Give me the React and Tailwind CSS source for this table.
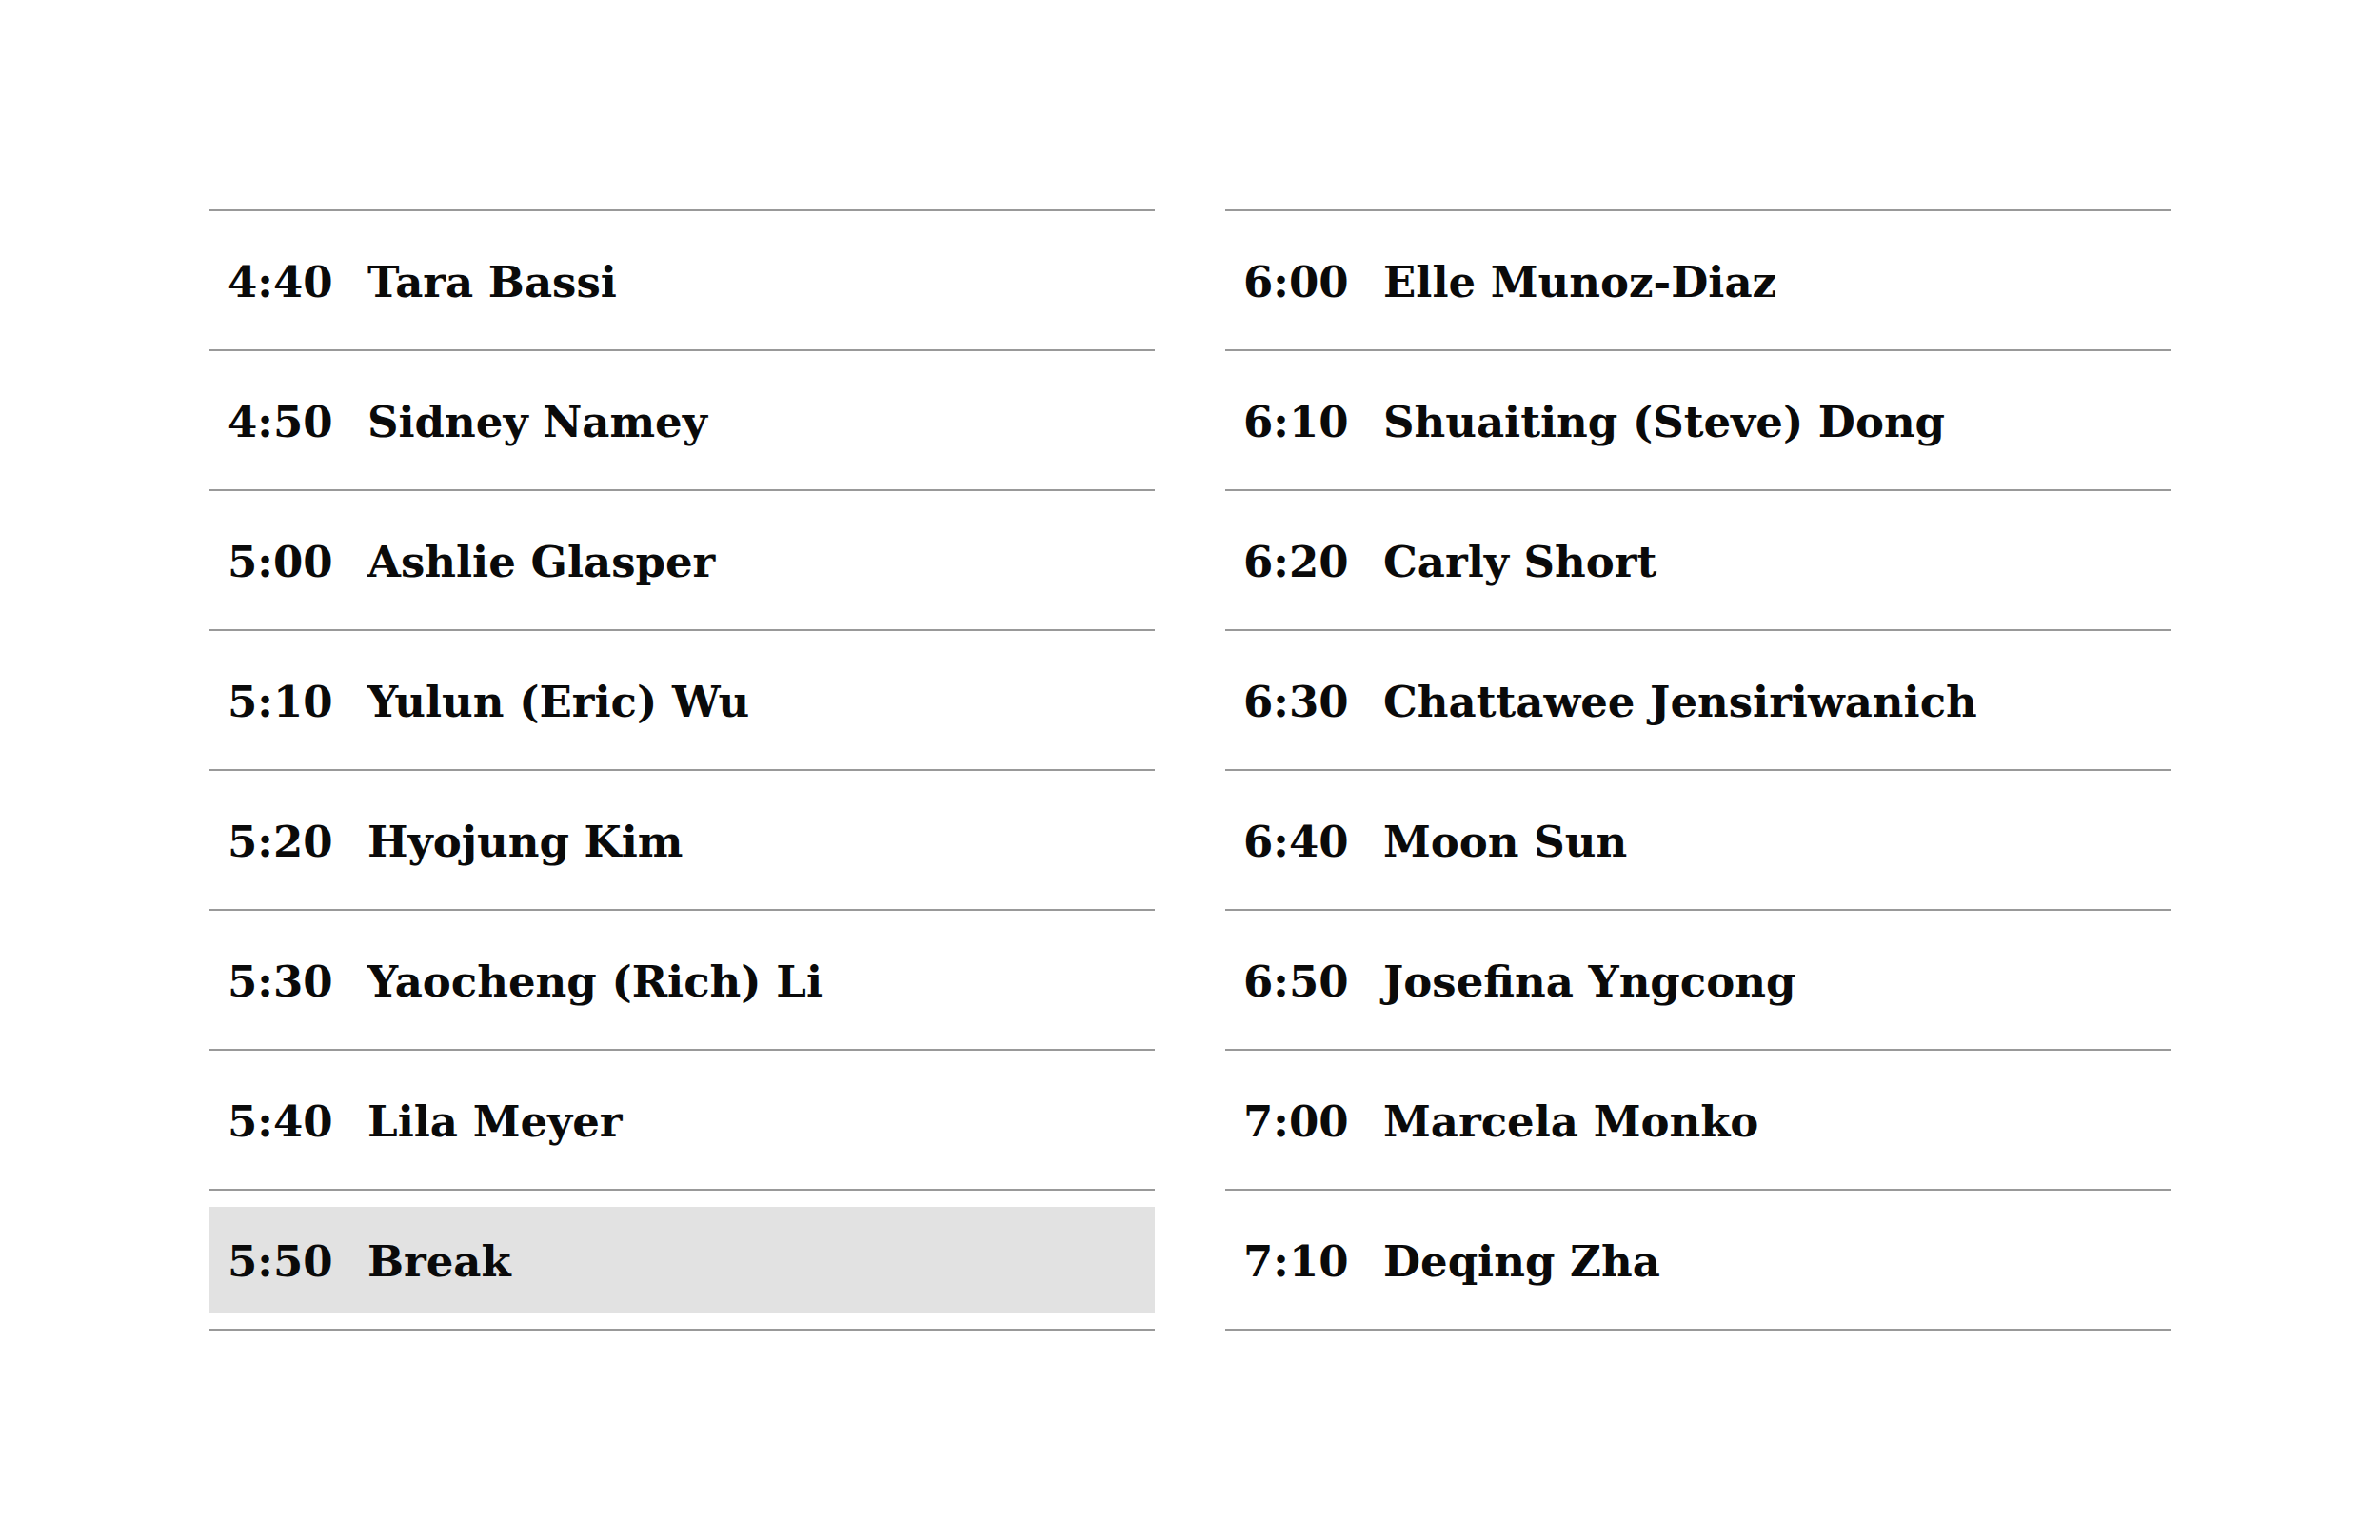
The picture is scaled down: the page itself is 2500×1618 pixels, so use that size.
import React from 'react';

const left = [
  { time: '4:40', name: 'Tara Bassi' },
  { time: '4:50', name: 'Sidney Namey' },
  { time: '5:00', name: 'Ashlie Glasper' },
  { time: '5:10', name: 'Yulun (Eric) Wu' },
  { time: '5:20', name: 'Hyojung Kim' },
  { time: '5:30', name: 'Yaocheng (Rich) Li' },
  { time: '5:40', name: 'Lila Meyer' },
  { time: '5:50', name: 'Break', isBreak: true },
];

const right = [
  { time: '6:00', name: 'Elle Munoz-Diaz' },
  { time: '6:10', name: 'Shuaiting (Steve) Dong' },
  { time: '6:20', name: 'Carly Short' },
  { time: '6:30', name: 'Chattawee Jensiriwanich' },
  { time: '6:40', name: 'Moon Sun' },
  { time: '6:50', name: 'Josefina Yngcong' },
  { time: '7:00', name: 'Marcela Monko' },
  { time: '7:10', name: 'Deqing Zha' },
];

const Slot = ({ slot }) => {
  const inner = (
    <div className="flex items-center pt-[3px]">
      <span className="w-[166px] pl-[19px] shrink-0">{slot.time}</span>
      <span>{slot.name}</span>
    </div>
  );

  return (
    <div className="border-t-2 border-[#999999] h-[147px] flex flex-col justify-center">
      {slot.isBreak ? (
        <div className="bg-[#e2e2e2] h-[111px] flex items-center">{inner}</div>
      ) : (
        inner
      )}
    </div>
  );
};

const Column = ({ slots }) => (
  <div className="flex flex-col border-b-2 border-[#999999]">
    {slots.map((slot) => (
      <Slot key={slot.time} slot={slot} />
    ))}
  </div>
);

const App = () => {
  return (
    <div className="w-[2500px] h-[1618px] bg-white px-[220px] pt-[220px] font-['DejaVu_Serif',serif] font-bold text-[45px] leading-none text-[#0a0a0a]">
      <div className="grid grid-cols-2 gap-x-[74px]">
        <Column slots={left} />
        <Column slots={right} />
      </div>
    </div>
  );
};

export default App;
